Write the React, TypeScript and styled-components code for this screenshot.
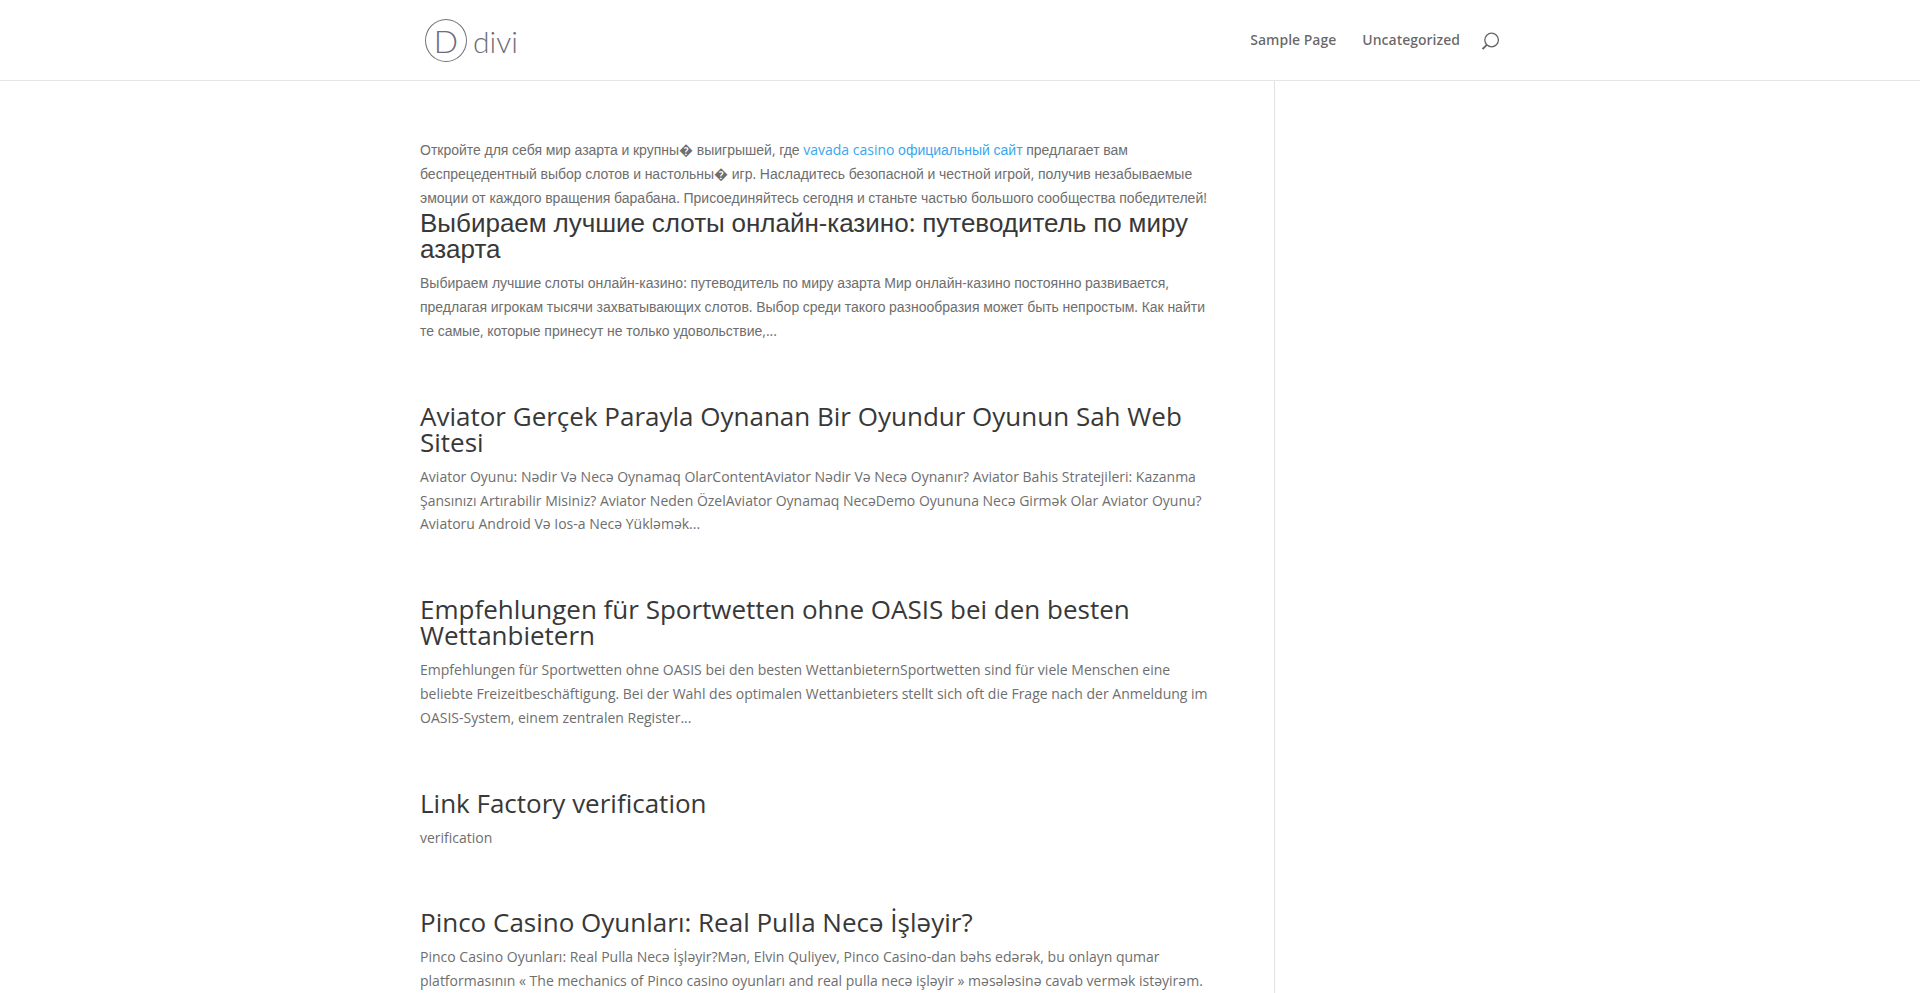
import React from "react";
import styled, { createGlobalStyle } from "styled-components";

const GlobalStyle = createGlobalStyle`
  html, body {
    margin: 0;
    padding: 0;
    background: #fff;
  }
  body {
    font-family: "Open Sans", Arial, sans-serif;
    font-size: 14px;
    line-height: 23.8px;
    color: #6e6e6e;
  }
`;

const Header = styled.header`
  height: 80px;
  border-bottom: 1px solid #e5e5e5;
`;

const HeaderInner = styled.div`
  width: 1080px;
  height: 100%;
  margin: 0 auto;
  display: flex;
  align-items: center;
  justify-content: space-between;
`;

const Logo = styled.a`
  display: flex;
  align-items: center;
  gap: 6px;
  margin-left: 5px;
  color: #6d6d78;
  font-family: Lato, sans-serif;
  font-weight: 300;
`;

const LogoRing = styled.span`
  box-sizing: border-box;
  width: 42px;
  height: 43px;
  margin-top: 1px;
  border: 1.5px solid #72727c;
  border-radius: 50%;
  display: flex;
  align-items: center;
  justify-content: center;
  font-size: 32px;
  line-height: 1;
`;

const LogoName = styled.span`
  font-size: 30px;
  line-height: 1;
  margin-top: 2px;
`;

const Nav = styled.nav`
  display: flex;
  align-items: center;
  gap: 26px;
`;

const NavLink = styled.a`
  font-weight: 600;
  font-size: 14px;
  color: rgba(0, 0, 0, 0.6);
`;

const SearchIcon = styled.svg`
  width: 18px;
  height: 18px;
  margin-left: -4px;
  margin-top: 2px;
  fill: none;
  stroke: #666;
  stroke-width: 1.3;
`;

const Page = styled.div`
  width: 1080px;
  margin: 0 auto;
  display: flex;
`;

const Content = styled.main`
  box-sizing: border-box;
  width: 855px;
  padding: 57px 59px 0 0;
  border-right: 1px solid #e2e2e2;
`;

const Sidebar = styled.aside`
  flex: 1;
`;

const Text = styled.p`
  margin: 0;
`;

const Link = styled.a`
  color: #3aa6ee;
`;

const Post = styled.article`
  margin-bottom: 60px;
`;

const PostTitle = styled.h2`
  margin: 0;
  padding-bottom: 10px;
  font-size: 26px;
  line-height: 26px;
  font-weight: 500;
  color: #383838;
`;

// line-height 0 so the second font does not stretch the line box
const Cyr = styled.span`
  font-family: "Liberation Sans", Arial, sans-serif;
  line-height: 0;
`;

// cyrillic letters fall back to Arial-like glyphs, the rest stays Open Sans
const Mixed: React.FC<{ children: string }> = ({ children }) => (
  <>
    {children.split(/([\u0400-\u04FF\uFFFD]+)/).map((part, i) =>
      i % 2 === 1 ? <Cyr key={i}>{part}</Cyr> : part
    )}
  </>
);

const posts = [
  {
    title: "Выбираем лучшие слоты онлайн-казино: путеводитель по миру азарта",
    excerpt:
      "Выбираем лучшие слоты онлайн-казино: путеводитель по миру азарта Мир онлайн-казино постоянно развивается, предлагая игрокам тысячи захватывающих слотов. Выбор среди такого разнообразия может быть непростым. Как найти те самые, которые принесут не только удовольствие,...",
  },
  {
    title: "Aviator Gerçek Parayla Oynanan Bir Oyundur Oyunun Sah Web Sitesi",
    excerpt:
      "Aviator Oyunu: Nədir Və Necə Oynamaq OlarContentAviator Nədir Və Necə Oynanır? Aviator Bahis Stratejileri: Kazanma Şansınızı Artırabilir Misiniz? Aviator Neden ÖzelAviator Oynamaq NecəDemo Oyununa Necə Girmək Olar Aviator Oyunu? Aviatoru Android Və Ios-a Necə Yükləmək...",
  },
  {
    title: "Empfehlungen für Sportwetten ohne OASIS bei den besten Wettanbietern",
    excerpt:
      "Empfehlungen für Sportwetten ohne OASIS bei den besten WettanbieternSportwetten sind für viele Menschen eine beliebte Freizeitbeschäftigung. Bei der Wahl des optimalen Wettanbieters stellt sich oft die Frage nach der Anmeldung im OASIS-System, einem zentralen Register...",
  },
  {
    title: "Link Factory verification",
    excerpt: "verification",
  },
  {
    title: "Pinco Casino Oyunları: Real Pulla Necə İşləyir?",
    excerpt:
      "Pinco Casino Oyunları: Real Pulla Necə İşləyir?Mən, Elvin Quliyev, Pinco Casino-dan bəhs edərək, bu onlayn qumar platformasının « The mechanics of Pinco casino oyunları and real pulla necə işləyir » məsələsinə cavab vermək istəyirəm.",
  },
];

const App: React.FC = () => {
  return (
    <>
      <GlobalStyle />
      <Header>
        <HeaderInner>
          <Logo>
            <LogoRing>D</LogoRing>
            <LogoName>divi</LogoName>
          </Logo>
          <Nav>
            <NavLink>Sample Page</NavLink>
            <NavLink>Uncategorized</NavLink>
            <SearchIcon viewBox="0 0 18 18">
              <circle cx="9.6" cy="8" r="6.8" />
              <path d="M4.8 12.8 0.6 17" strokeWidth="1.8" />
            </SearchIcon>
          </Nav>
        </HeaderInner>
      </Header>
      <Page>
        <Content>
          <Text>
            <Mixed>Откройте для себя мир азарта и крупны� выигрышей, где </Mixed>
            <Link>
              <Mixed>vavada casino официальный сайт</Mixed>
            </Link>
            <Mixed>
              {" предлагает вам беспрецедентный выбор слотов и настольны� игр. Насладитесь безопасной и честной игрой, получив незабываемые эмоции от каждого вращения барабана. Присоединяйтесь сегодня и станьте частью большого сообщества победителей!"}
            </Mixed>
          </Text>
          {posts.map((post) => (
            <Post key={post.title}>
              <PostTitle>
                <Mixed>{post.title}</Mixed>
              </PostTitle>
              <Text>
                <Mixed>{post.excerpt}</Mixed>
              </Text>
            </Post>
          ))}
        </Content>
        <Sidebar />
      </Page>
    </>
  );
};

export default App;
